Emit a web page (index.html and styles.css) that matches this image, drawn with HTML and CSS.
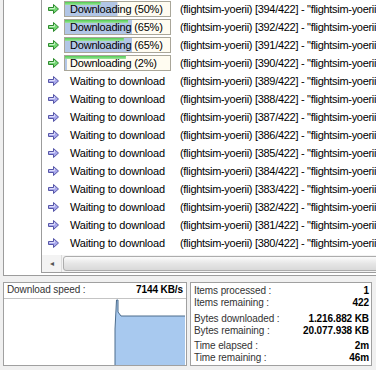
FILE: index.html
```html
<!DOCTYPE html>
<html lang="en">

<head>
  <meta charset="UTF-8">
  <title>Download queue</title>
  <link rel="stylesheet" href="styles.css">
</head>

<body>
  <svg class="defs" width="0" height="0">
    <symbol id="arrowGreen" viewBox="0 0 11 10">
      <path d="M0.5 3.5H5.5V0.5L10.5 5L5.5 9.5V6.5H0.5Z" fill="#74d874" stroke="#2e8b2e" />
      <path d="M1.5 4.5H6.5V2.5" fill="none" stroke="#c6f3c6" />
    </symbol>
    <symbol id="arrowBlue" viewBox="0 0 11 10">
      <path d="M0.5 3.5H5.5V0.5L10.5 5L5.5 9.5V6.5H0.5Z" fill="#a9a9ec" stroke="#5656a8" />
      <path d="M1.5 4.5H6.5V2.5" fill="none" stroke="#dcdcfa" />
    </symbol>
  </svg>

  <div class="main-panel">
    <div class="side-pane"></div>
    <div class="queue">
      <div class="queue-rows">
        <div class="row">
          <div class="status"><svg class="arrow"><use href="#arrowGreen" /></svg>
            <div class="progress" style="--p:50%;--g:34%">Downloading (50%)</div>
          </div>
          <div class="details">(flightsim-yoerii) [394/422] - "flightsim-yoerii.part394.rar"</div>
        </div>
        <div class="row">
          <div class="status"><svg class="arrow"><use href="#arrowGreen" /></svg>
            <div class="progress" style="--p:64%;--g:60%">Downloading (65%)</div>
          </div>
          <div class="details">(flightsim-yoerii) [392/422] - "flightsim-yoerii.part392.rar"</div>
        </div>
        <div class="row">
          <div class="status"><svg class="arrow"><use href="#arrowGreen" /></svg>
            <div class="progress" style="--p:64%;--g:56%">Downloading (65%)</div>
          </div>
          <div class="details">(flightsim-yoerii) [391/422] - "flightsim-yoerii.part391.rar"</div>
        </div>
        <div class="row">
          <div class="status"><svg class="arrow"><use href="#arrowGreen" /></svg>
            <div class="progress" style="--p:2%;--g:58%">Downloading (2%)</div>
          </div>
          <div class="details">(flightsim-yoerii) [390/422] - "flightsim-yoerii.part390.rar"</div>
        </div>
        <div class="row">
          <div class="status"><svg class="arrow"><use href="#arrowBlue" /></svg><span class="waiting">Waiting to download</span></div>
          <div class="details">(flightsim-yoerii) [389/422] - "flightsim-yoerii.part389.rar"</div>
        </div>
        <div class="row">
          <div class="status"><svg class="arrow"><use href="#arrowBlue" /></svg><span class="waiting">Waiting to download</span></div>
          <div class="details">(flightsim-yoerii) [388/422] - "flightsim-yoerii.part388.rar"</div>
        </div>
        <div class="row">
          <div class="status"><svg class="arrow"><use href="#arrowBlue" /></svg><span class="waiting">Waiting to download</span></div>
          <div class="details">(flightsim-yoerii) [387/422] - "flightsim-yoerii.part387.rar"</div>
        </div>
        <div class="row">
          <div class="status"><svg class="arrow"><use href="#arrowBlue" /></svg><span class="waiting">Waiting to download</span></div>
          <div class="details">(flightsim-yoerii) [386/422] - "flightsim-yoerii.part386.rar"</div>
        </div>
        <div class="row">
          <div class="status"><svg class="arrow"><use href="#arrowBlue" /></svg><span class="waiting">Waiting to download</span></div>
          <div class="details">(flightsim-yoerii) [385/422] - "flightsim-yoerii.part385.rar"</div>
        </div>
        <div class="row">
          <div class="status"><svg class="arrow"><use href="#arrowBlue" /></svg><span class="waiting">Waiting to download</span></div>
          <div class="details">(flightsim-yoerii) [384/422] - "flightsim-yoerii.part384.rar"</div>
        </div>
        <div class="row">
          <div class="status"><svg class="arrow"><use href="#arrowBlue" /></svg><span class="waiting">Waiting to download</span></div>
          <div class="details">(flightsim-yoerii) [383/422] - "flightsim-yoerii.part383.rar"</div>
        </div>
        <div class="row">
          <div class="status"><svg class="arrow"><use href="#arrowBlue" /></svg><span class="waiting">Waiting to download</span></div>
          <div class="details">(flightsim-yoerii) [382/422] - "flightsim-yoerii.part382.rar"</div>
        </div>
        <div class="row">
          <div class="status"><svg class="arrow"><use href="#arrowBlue" /></svg><span class="waiting">Waiting to download</span></div>
          <div class="details">(flightsim-yoerii) [381/422] - "flightsim-yoerii.part381.rar"</div>
        </div>
        <div class="row">
          <div class="status"><svg class="arrow"><use href="#arrowBlue" /></svg><span class="waiting">Waiting to download</span></div>
          <div class="details">(flightsim-yoerii) [380/422] - "flightsim-yoerii.part380.rar"</div>
        </div>
      </div>
      <div class="hscroll">
        <div class="hscroll-btn">&#9666;</div>
        <div class="hscroll-thumb"></div>
      </div>
    </div>
  </div>

  <div class="stats-area">
    <div class="speed-box">
      <div class="speed-head">
        <span>Download speed :</span>
        <b>7144 KB/s</b>
      </div>
      <svg class="speed-graph" width="182" height="66" viewBox="0 0 182 66">
        <path d="M111 66V30L112.5 1H114V13L117 17H181V66Z" fill="#a8c9ef" />
        <path d="M111 66V30L112.5 1H114V13L117 17H181" fill="none" stroke="#4c6c8c" stroke-width="1" />
      </svg>
    </div>
    <div class="totals-box">
      <div class="totals-group">
        <div class="totals-row"><span>Items processed :</span><b>1</b></div>
        <div class="totals-row"><span>Items remaining :</span><b>422</b></div>
      </div>
      <div class="totals-group">
        <div class="totals-row"><span>Bytes downloaded :</span><b>1.216.882 KB</b></div>
        <div class="totals-row"><span>Bytes remaining :</span><b>20.077.938 KB</b></div>
      </div>
      <div class="totals-group">
        <div class="totals-row"><span>Time elapsed :</span><b>2m</b></div>
        <div class="totals-row"><span>Time remaining :</span><b>46m</b></div>
      </div>
    </div>
  </div>
</body>

</html>
```

FILE: styles.css
```css
body {
  margin: 0;
  background-color: #f0f0f0;
  font-family: "Liberation Sans", Arial, sans-serif;
  font-size: 11px;
  color: #000;
  overflow: hidden;
}

.defs {
  position: absolute;
}

.main-panel {
  display: flex;
  margin-left: 3px;
  width: 420px;
  height: 275px;
  border-left: 1px solid #9c9c9c;
  border-bottom: 1px solid #9c9c9c;
  background-color: #fff;
}

.side-pane {
  width: 37px;
  flex-shrink: 0;
}

.queue {
  flex: 1;
  height: 272px;
  border-left: 1px solid #9c9c9c;
  border-bottom: 1px solid #9c9c9c;
  display: flex;
  flex-direction: column;
}

.queue-rows {
  height: 255px;
  overflow: hidden;
}

.row {
  display: flex;
  align-items: center;
  height: 18px;
  white-space: nowrap;
}

.status {
  display: flex;
  align-items: center;
  width: 134px;
  flex-shrink: 0;
  letter-spacing: -0.2px;
}

.arrow {
  width: 11px;
  height: 10px;
  margin-left: 6px;
  margin-right: 5px;
}

.progress {
  box-sizing: border-box;
  width: 107px;
  height: 16px;
  padding-left: 5px;
  line-height: 14px;
  border: 1px solid #a9a699;
  background-color: #fffcf1;
  background-image: linear-gradient(#52cc52, #9ee49e), linear-gradient(#b2c6e6, #b2c6e6);
  background-repeat: no-repeat;
  background-size: var(--g) 3px, var(--p) 100%;
}

.waiting {
  padding-left: 6px;
}

.details {
  padding-left: 4px;
  letter-spacing: -0.3px;
}

.hscroll {
  display: flex;
  height: 17px;
  background-color: #f3f3f3;
}

.hscroll-btn {
  width: 19px;
  line-height: 17px;
  text-align: center;
  font-size: 8px;
  color: #555;
  border-right: 1px solid #dcdcdc;
}

.hscroll-thumb {
  flex: 1;
  margin: 1px 0 1px 1px;
  border: 1px solid #acacac;
  border-radius: 3px;
  background: linear-gradient(#fbfbfb, #e6e6e6 50%, #d9d9d9);
}

.stats-area {
  display: flex;
  gap: 3px;
  margin-top: 6px;
  margin-left: 3px;
  font-size: 10px;
  letter-spacing: -0.1px;
}

.speed-box,
.totals-box {
  box-sizing: border-box;
  height: 84px;
  border: 1px solid #a0a0a0;
  background-color: #fff;
}

.speed-box {
  width: 184px;
}

.speed-head {
  display: flex;
  justify-content: space-between;
  height: 15px;
  line-height: 14px;
  padding: 0 3px;
  border-bottom: 1px solid #c4c4c4;
  color: #333;
}

.speed-head b {
  color: #000;
}

.speed-graph {
  display: block;
}

.totals-box {
  width: 182px;
  padding: 2px 2px 0 3px;
}

.totals-group {
  margin-bottom: 3.5px;
}

.totals-row {
  display: flex;
  justify-content: space-between;
  height: 12px;
  line-height: 12px;
  color: #333;
}

.totals-row b {
  color: #000;
}
```
